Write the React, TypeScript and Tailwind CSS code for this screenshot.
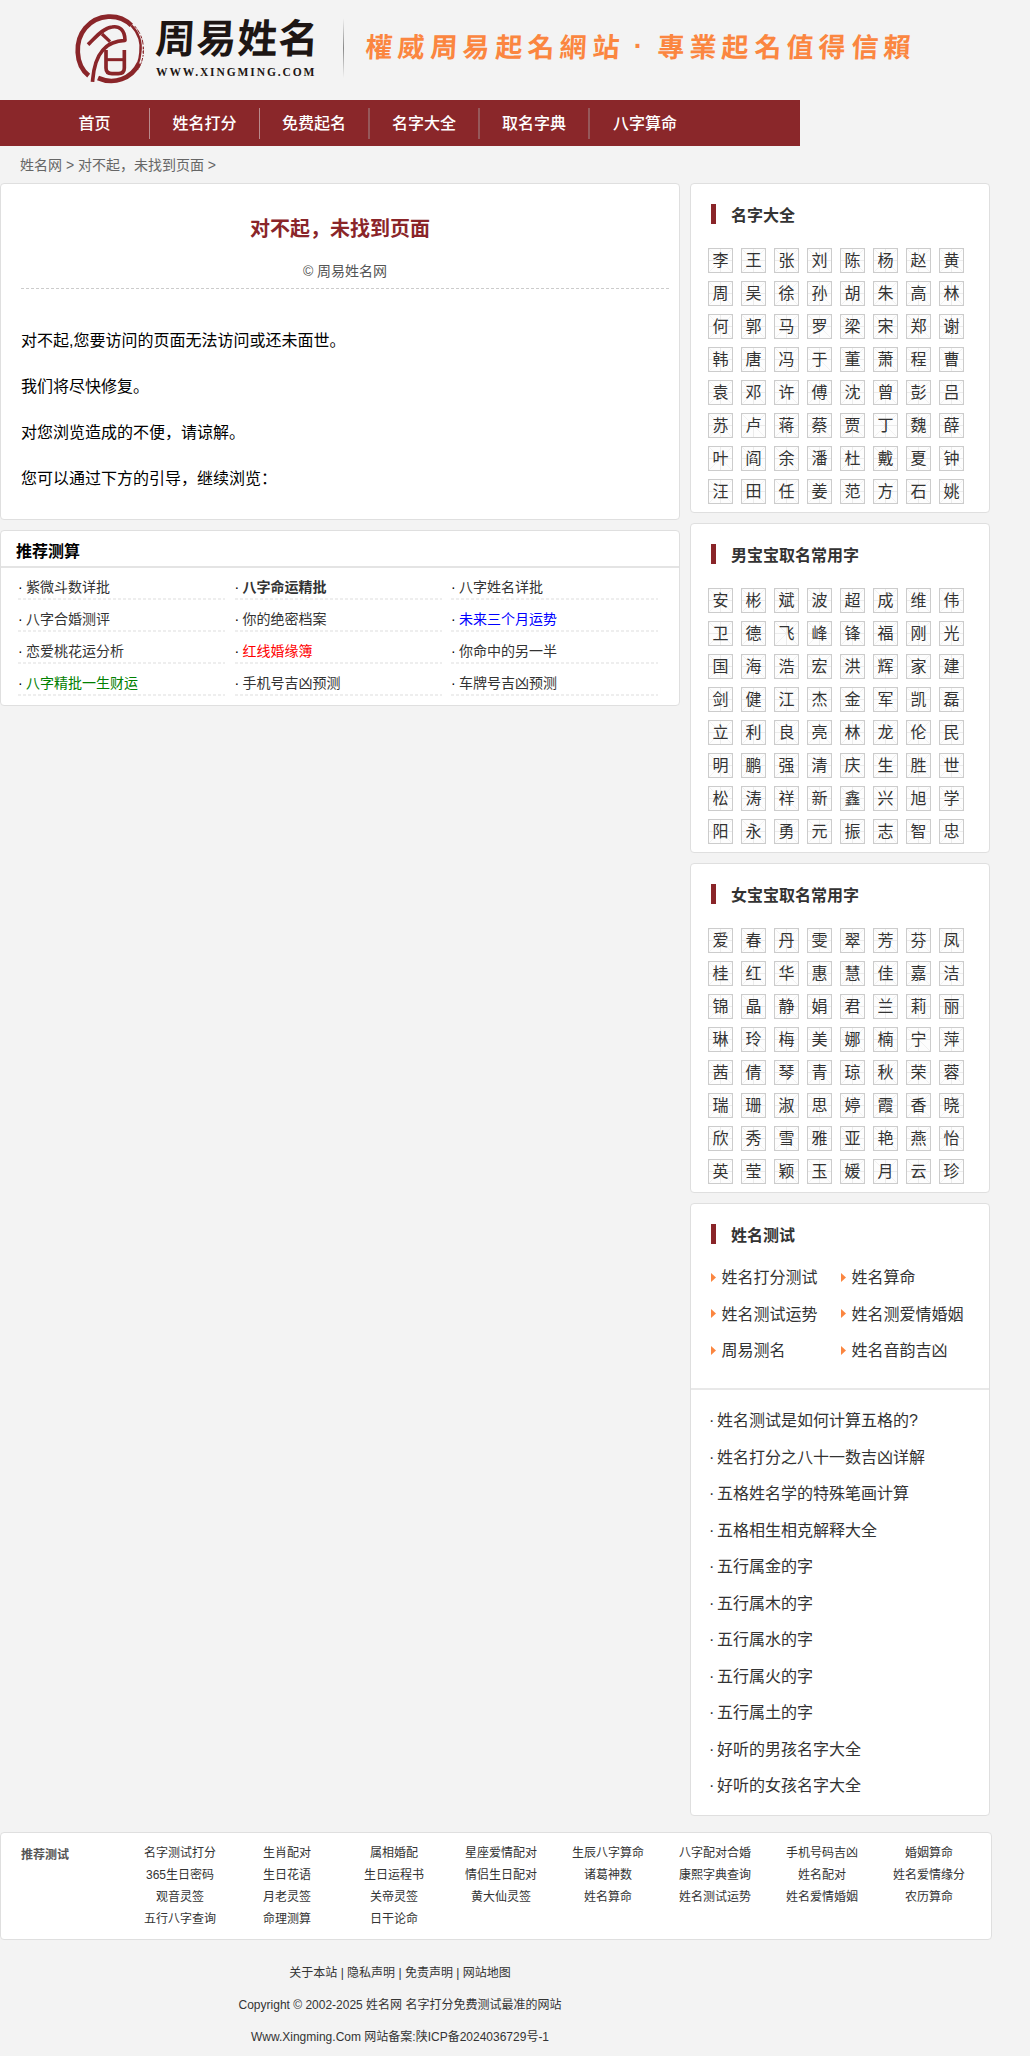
const NAV = ['首页', '姓名打分', '免费起名', '名字大全', '取名字典', '八字算命'];

const SURNAMES =
  '李王张刘陈杨赵黄周吴徐孙胡朱高林何郭马罗梁宋郑谢韩唐冯于董萧程曹袁邓许傅沈曾彭吕苏卢蒋蔡贾丁魏薛叶阎余潘杜戴夏钟汪田任姜范方石姚';
const BOYS =
  '安彬斌波超成维伟卫德飞峰锋福刚光国海浩宏洪辉家建剑健江杰金军凯磊立利良亮林龙伦民明鹏强清庆生胜世松涛祥新鑫兴旭学阳永勇元振志智忠';
const GIRLS =
  '爱春丹雯翠芳芬凤桂红华惠慧佳嘉洁锦晶静娟君兰莉丽琳玲梅美娜楠宁萍茜倩琴青琼秋荣蓉瑞珊淑思婷霞香晓欣秀雪雅亚艳燕怡英莹颖玉媛月云珍';

const RECOMMENDED: { text: string; style: string }[] = [
  { text: '紫微斗数详批', style: '' },
  { text: '八字命运精批', style: 'font-bold' },
  { text: '八字姓名详批', style: '' },
  { text: '八字合婚测评', style: '' },
  { text: '你的绝密档案', style: '' },
  { text: '未来三个月运势', style: 'text-[#0000ff]' },
  { text: '恋爱桃花运分析', style: '' },
  { text: '红线婚缘簿', style: 'text-[#ff0000]' },
  { text: '你命中的另一半', style: '' },
  { text: '八字精批一生财运', style: 'text-[#008000]' },
  { text: '手机号吉凶预测', style: '' },
  { text: '车牌号吉凶预测', style: '' },
];

const TESTS = ['姓名打分测试', '姓名算命', '姓名测试运势', '姓名测爱情婚姻', '周易测名', '姓名音韵吉凶'];

const ARTICLES = [
  '姓名测试是如何计算五格的?',
  '姓名打分之八十一数吉凶详解',
  '五格姓名学的特殊笔画计算',
  '五格相生相克解释大全',
  '五行属金的字',
  '五行属木的字',
  '五行属水的字',
  '五行属火的字',
  '五行属土的字',
  '好听的男孩名字大全',
  '好听的女孩名字大全',
];

const FOOTER_LINKS = [
  '名字测试打分', '生肖配对', '属相婚配', '星座爱情配对', '生辰八字算命', '八字配对合婚', '手机号码吉凶', '婚姻算命',
  '365生日密码', '生日花语', '生日运程书', '情侣生日配对', '诸葛神数', '康熙字典查询', '姓名配对', '姓名爱情缘分',
  '观音灵签', '月老灵签', '关帝灵签', '黄大仙灵签', '姓名算命', '姓名测试运势', '姓名爱情婚姻', '农历算命',
  '五行八字查询', '命理测算', '日干论命',
];

function Seal() {
  return (
    <svg viewBox="0 0 240 240" className="h-20 w-20 shrink-0" fill="none" stroke="#8a2529">
      <path d="M56 203 C14 170 14 98 46 60 C82 18 146 14 184 52" strokeWidth="14" />
      <path d="M184 52 C205 74 216 100 211 134 C210 146 208 156 204 166" strokeWidth="7" />
      <path d="M194 54 C213 76 223 102 219 134" strokeWidth="3" strokeDasharray="9 4 15 6" />
      <path d="M84 210 C131 231 185 213 207 166" strokeWidth="14" />
      <path d="M220 118 C222 142 216 166 203 186" strokeWidth="3" strokeDasharray="5 4 11 3" />
      <path d="M58 106 C78 87 100 60 126 57 C148 53 165 66 165 97 C113 99 75 128 68 216" strokeWidth="11" strokeLinecap="square" strokeLinejoin="round" />
      <path d="M96 78 L120 101" strokeWidth="10" />
      <path d="M108 126 V180 Q108 197 126 197 H145 Q163 197 163 180 V126" strokeWidth="11" />
      <path d="M108 155 H163" strokeWidth="9" />
    </svg>
  );
}

function Header() {
  return (
    <header className="flex h-[100px] pl-[70px]">
      <div className="pt-2">
        <Seal />
      </div>
      <div className="ml-[5px] w-[164px] pt-[15px]">
        <div className="flex h-[48px] -skew-x-3 items-center text-[40px] leading-none font-bold text-[#1d1614]">
          {[...'周易姓名'].map((c) => (
            <span key={c} className="w-[41px] text-center">{c}</span>
          ))}
        </div>
        <div className="mt-[2px] pl-[1px] font-['Liberation_Serif',serif] text-[11.5px] leading-[14px] font-bold tracking-[1.9px] whitespace-nowrap text-[#1d1614]">
          WWW.XINGMING.COM
        </div>
      </div>
      <div className="mt-[18px] ml-[24px] h-[60px] w-px bg-linear-to-b from-transparent via-[#888] to-transparent" />
      <div className="ml-[19px] flex h-[92px] items-center font-['Noto_Sans_CJK_TC',sans-serif] text-[27px] font-bold text-[#fb8640]">
        {[...'權威周易起名網站'].map((c, i) => (
          <span key={i} className="w-[32.4px] -skew-x-3 text-center">{c}</span>
        ))}
        <span className="w-[32.4px] text-center font-['Liberation_Sans',sans-serif]">·</span>
        {[...'專業起名值得信賴'].map((c, i) => (
          <span key={i} className="w-[32.4px] -skew-x-3 text-center">{c}</span>
        ))}
      </div>
    </header>
  );
}

function CharPanel({ title, chars }: { title: string; chars: string }) {
  return (
    <section className="h-[330px] rounded border border-[#dfdfdf] bg-white">
      <PanelTitle>{title}</PanelTitle>
      <div className="mt-6 ml-[17px] grid w-[264px] grid-cols-8 gap-y-2">
        {[...chars].map((c, i) => (
          <a key={i} className="relative block h-[25px] w-[25px] border border-[#ccc] bg-[#fdfdfd] text-center text-base leading-[23px]">
            <svg viewBox="0 0 23 23" className="absolute inset-0 h-full w-full" stroke="#ebebeb" fill="none">
              <path d="M0 11.5H23M11.5 0V23" />
              <path d="M0 0L23 23M23 0L0 23" strokeWidth="0.7" />
            </svg>
            <span className="relative">{c}</span>
          </a>
        ))}
      </div>
    </section>
  );
}

function PanelTitle({ children }: { children: string }) {
  return (
    <h2 className="ml-5 flex h-10 items-end pt-5 text-base leading-5 font-bold">
      <span className="mr-[15px] h-5 w-[5px] bg-[#8a2529]" />
      <span className="relative top-0.5">{children}</span>
    </h2>
  );
}

export default function App() {
  return (
    <div className="h-[2056px] w-full overflow-hidden bg-[#f3f3f3] font-['Liberation_Sans','Noto_Sans_CJK_SC',sans-serif] text-[#333]">
      <Header />
      <nav className="flex h-[46px] w-[800px] bg-[#8a272a] pt-2 pl-10 text-base leading-[31px] font-medium text-white">
        {NAV.map((n, i) => (
          <a key={n} className={i < 2 ? 'h-[31px] w-[110px] border-r border-[#b98a8c] text-center' : i < 5 ? 'h-[31px] w-[110px] border-r-2 border-[#96585a] text-center' : 'h-[31px] w-[110px] text-center'}>
            {n}
          </a>
        ))}
      </nav>
      <div className="h-[37px] pl-5 text-sm leading-[38px] text-[#666]">姓名网 &gt; 对不起，未找到页面 &gt;</div>

      <div className="flex gap-[10px]">
        <main className="w-[680px]">
          <section className="h-[337px] rounded border border-[#dfdfdf] bg-white pl-5">
            <h1 className="w-[638px] pt-[30px] text-center text-xl leading-[30px] font-bold text-[#8a2529]">对不起，未找到页面</h1>
            <div className="mt-[15px] h-[30px] w-[648px] border-b border-dashed border-[#ccc] text-center text-sm leading-[25px] text-[#555]">
              © 周易姓名网
            </div>
            <div className="mt-[29px] text-base leading-[46px] text-black">
              <p>对不起,您要访问的页面无法访问或还未面世。</p>
              <p>我们将尽快修复。</p>
              <p>对您浏览造成的不便，请谅解。</p>
              <p>您可以通过下方的引导，继续浏览：</p>
            </div>
          </section>
          <section className="mt-[10px] h-[176px] rounded border border-[#dfdfdf] bg-white">
            <h2 className="h-[37px] border-b-2 border-[#e4e4e4] pl-[15px] text-base leading-[41px] font-bold text-black">推荐测算</h2>
            <ul className="grid grid-cols-[repeat(3,207px)] gap-x-[9.5px] gap-y-1 pt-1 pl-[17px] text-sm">
              {RECOMMENDED.map((r) => (
                <li key={r.text} className="h-7 bg-[repeating-linear-gradient(90deg,#eee_0_3px,#fff_3px_5px)] bg-[length:100%_2px] bg-bottom bg-no-repeat leading-[30px]">
                  <span className="inline-block w-2 text-black">·</span>
                  <span className={r.style}>{r.text}</span>
                </li>
              ))}
            </ul>
          </section>
        </main>

        <aside className="flex w-[300px] flex-col gap-[10px]">
          <CharPanel title="名字大全" chars={SURNAMES} />
          <CharPanel title="男宝宝取名常用字" chars={BOYS} />
          <CharPanel title="女宝宝取名常用字" chars={GIRLS} />
          <section className="h-[613px] rounded border border-[#dfdfdf] bg-white">
            <PanelTitle>姓名测试</PanelTitle>
            <ul className="mt-[15px] ml-5 grid h-[129px] grid-cols-[130px_1fr] content-start leading-[36.5px]">
              {TESTS.map((t) => (
                <li key={t} className="flex items-center">
                  <svg viewBox="0 0 5 9" className="mr-[5.5px] h-[9px] w-[5px]">
                    <path d="M0 0L5 4.5L0 9Z" fill="#fb8640" />
                  </svg>
                  <span className="relative top-px">{t}</span>
                </li>
              ))}
            </ul>
            <ul className="border-t-2 border-[#e8e8e8] pt-[13px] pl-[18px] leading-[36.5px]">
              {ARTICLES.map((t) => (
                <li key={t}>
                  <span className="inline-block w-2">·</span>
                  {t}
                </li>
              ))}
            </ul>
          </section>
        </aside>
      </div>

      <section className="mt-4 flex h-[108px] w-[992px] rounded border border-[#dfdfdf] bg-white text-xs">
        <h2 className="w-[125.5px] pt-[11px] pl-5 leading-[22px] font-bold text-[#555]">推荐测试</h2>
        <ul className="grid grid-cols-[repeat(8,107px)] content-start pt-[9px] text-center leading-[22px]">
          {FOOTER_LINKS.map((t) => (
            <li key={t}>{t}</li>
          ))}
        </ul>
      </section>
      <footer className="mt-[17px] w-[800px] text-center text-xs leading-8">
        <p>关于本站 | 隐私声明 | 免责声明 | 网站地图</p>
        <p>Copyright © 2002-2025 姓名网 名字打分免费测试最准的网站</p>
        <p>Www.Xingming.Com 网站备案:陕ICP备2024036729号-1</p>
      </footer>
    </div>
  );
}
